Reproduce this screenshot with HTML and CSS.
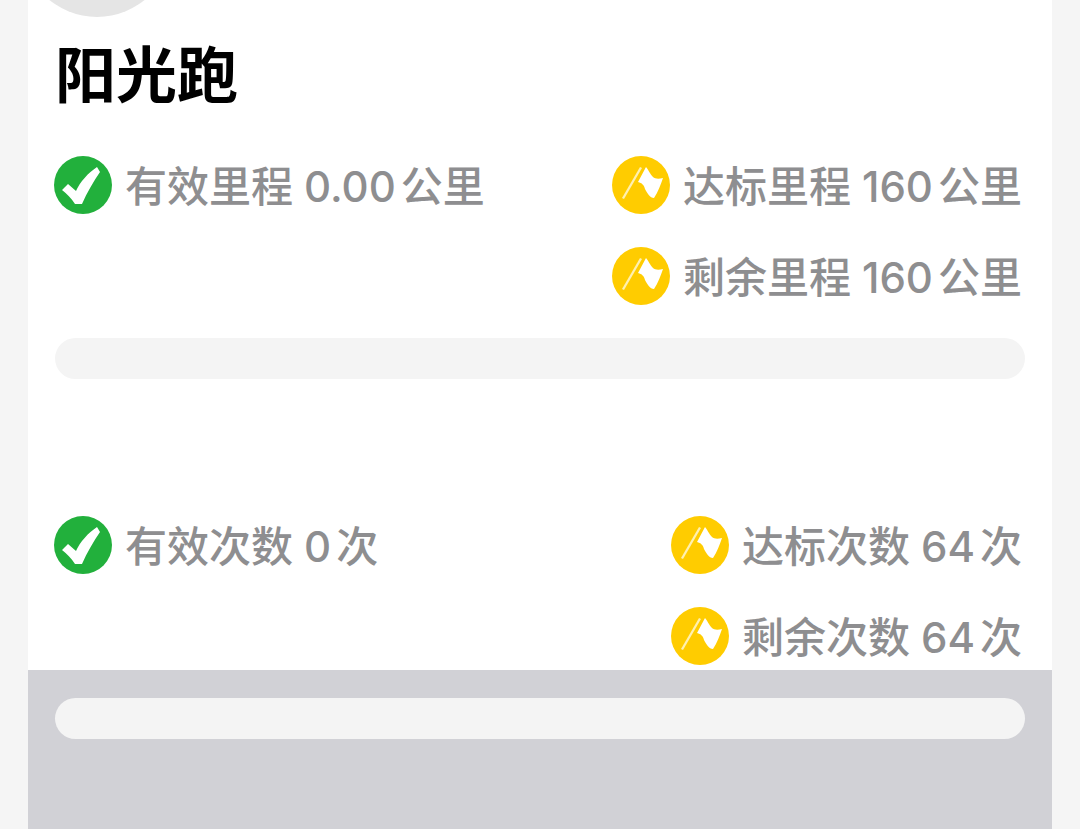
FILE: index.html
```html
<!DOCTYPE html>
<html>
    <head>
        <meta charset="utf-8">
        <link rel="stylesheet" href="styles.css">
    </head>
    <body>
        <svg class="defs" width="0" height="0">
            <symbol id="check" viewBox="0 0 58 58">
                <circle cx="29" cy="29" r="29" fill="#22b03c"/>
                <path d="M8 34 L14 28 L22 35 C26 26 34 17 43 11 L46 16 C40 25 33 36 28 48 L21 48 C17 42 13 38 8 34 Z" fill="#fff"/>
            </symbol>
            <symbol id="flag" viewBox="0 0 58 58">
                <circle cx="29" cy="29" r="29" fill="#ffcc00"/>
                <path d="M10 42 L28 11 L30 12 L12 43 Z" fill="#fff0b0"/>
                <path d="M34 11 C36 13 38 18 41 21 C43 23 47 23 51 22 C49 28 46 36 42 42 C38 42 35 37 33 33 C32 29 30 27 26 26 Z" fill="#fff"/>
            </symbol>
        </svg>
        <div class="card">
            <div class="upper">
                <div class="avatar"></div>
                <h1 class="title">阳光跑</h1>
                <div class="stats">
                    <div class="stat">
                        <svg class="icon"><use href="#check"/></svg>
                        <span>有效里程<span class="num">0.00</span>公里</span>
                    </div>
                    <div class="goals">
                        <div class="stat">
                            <svg class="icon"><use href="#flag"/></svg>
                            <span>达标里程<span class="num">160</span>公里</span>
                        </div>
                        <div class="stat">
                            <svg class="icon"><use href="#flag"/></svg>
                            <span>剩余里程<span class="num">160</span>公里</span>
                        </div>
                    </div>
                </div>
                <div class="bar"></div>
                <div class="stats second">
                    <div class="stat">
                        <svg class="icon"><use href="#check"/></svg>
                        <span>有效次数<span class="num">0</span>次</span>
                    </div>
                    <div class="goals">
                        <div class="stat">
                            <svg class="icon"><use href="#flag"/></svg>
                            <span>达标次数<span class="num">64</span>次</span>
                        </div>
                        <div class="stat">
                            <svg class="icon"><use href="#flag"/></svg>
                            <span>剩余次数<span class="num">64</span>次</span>
                        </div>
                    </div>
                </div>
            </div>
            <div class="lower">
                <div class="bar"></div>
            </div>
        </div>
    </body>
</html>
```

FILE: styles.css
```css
*{
    box-sizing: border-box;
    margin: 0;
}
html, body{
    height: 100%;
    overflow: hidden;
}
body{
    background-color: #f5f5f5;
    font-family: "Inter", "Noto Sans CJK SC", sans-serif;
}
.defs{
    display: block;
    height: 0;
}
.card{
    margin: 0 28px;
    height: 829px;
    display: flex;
    flex-direction: column;
}
.upper{
    height: 670px;
    background-color: #fff;
    padding: 0 27px;
}
.avatar{
    width: 150px;
    height: 150px;
    margin: -133px 0 0 -33px;
    border-radius: 50%;
    background-color: #e5e5e5;
}
.title{
    margin: 24px 0 0 0;
    font-size: 61px;
    line-height: 70px;
    font-weight: 700;
    color: #000;
}
.stats{
    margin: 45px 0 0 -1px;
    display: flex;
    justify-content: space-between;
    padding-right: 3px;
}
.second{
    margin-top: 137px;
}
.goals{
    display: flex;
    flex-direction: column;
    gap: 33px;
}
.stat{
    display: flex;
    align-items: center;
    gap: 13px;
    height: 58px;
    font-size: 42px;
    font-weight: 500;
    color: #8e8e90;
    white-space: nowrap;
}
.stat > span{
    padding-bottom: 4px;
}
.num{
    margin: 0 5px 0 11px;
}
.icon{
    width: 58px;
    height: 58px;
    flex: none;
}
.bar{
    height: 41px;
    margin-top: 33px;
    border-radius: 21px;
    background-color: #f4f4f4;
}
.lower{
    flex: 1;
    background-color: #d1d1d6;
    padding: 28px 27px 0;
}
.lower .bar{
    margin-top: 0;
}
```
